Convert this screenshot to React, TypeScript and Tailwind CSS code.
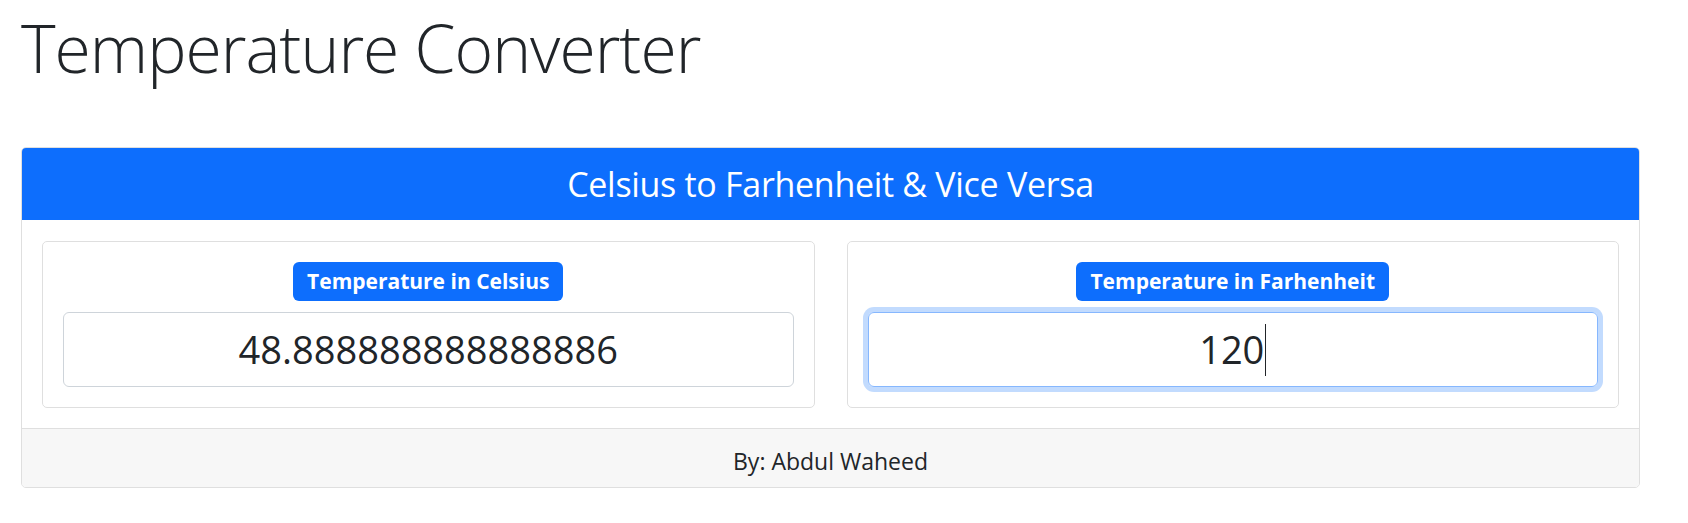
const font = "font-['Open_Sans','Noto_Sans',sans-serif]";

const Field = ({
  label,
  value,
  focused,
}: {
  label: string;
  value: string;
  focused?: boolean;
}) => {
  return (
    <div className="flex flex-col items-center rounded-[5px] border border-[#dfdfdf] p-[20px]">
      <span className="flex h-[39px] items-center rounded-[6px] bg-[#0d6efd] px-[14px] text-[21px] font-bold text-white">
        {label}
      </span>
      <div
        className={`mt-[11px] flex h-[75px] w-full items-center justify-center rounded-[6px] border text-[38px] text-[#212529] ${
          focused
            ? "border-[#86b7fe] shadow-[0_0_0_5px_rgba(13,110,253,0.25)]"
            : "border-[#ced4da]"
        }`}
      >
        <span>{value}</span>
        {focused && <span className="ml-[1px] h-[52px] w-[1px] bg-[#212529]" />}
      </div>
    </div>
  );
};

const App = () => {
  return (
    <div className={`min-h-screen bg-white px-[21px] text-[#212529] ${font}`}>
      <h1 className="h-[147px] pt-[8px] text-[66px] font-light leading-[1.2] tracking-[-1px]">
        Temperature Converter
      </h1>
      <div className="w-[1619px] overflow-hidden rounded-[5px] border border-[#dfdfdf]">
        <div className="flex h-[72px] items-center justify-center bg-[#0d6efd] text-[34px] tracking-[-0.3px] text-white">
          Celsius to Farhenheit &amp; Vice Versa
        </div>
        <div className="grid grid-cols-2 gap-[32px] px-[20px] pt-[21px] pb-[20px]">
          <Field label="Temperature in Celsius" value="48.888888888888886" />
          <Field label="Temperature in Farhenheit" value="120" focused />
        </div>
        <div className="flex h-[59px] items-center justify-center border-t border-[#dfdfdf] bg-[#f7f7f7] pt-[6px] text-[23px]">
          By: Abdul Waheed
        </div>
      </div>
    </div>
  );
};

export default App;
